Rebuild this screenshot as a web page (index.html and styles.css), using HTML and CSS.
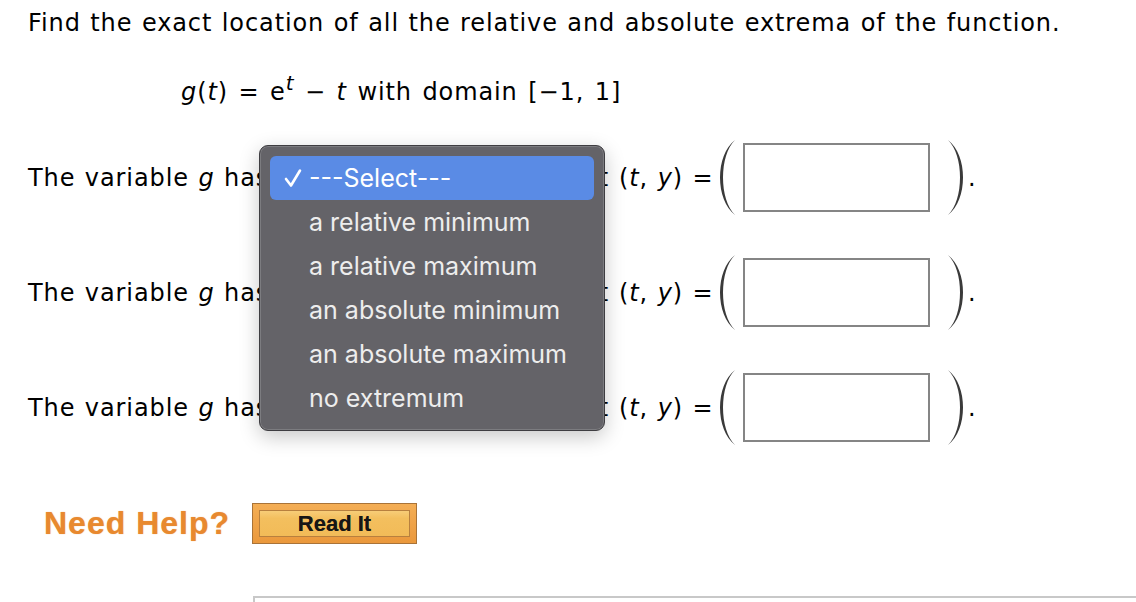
FILE: index.html
```html
<!DOCTYPE html>
<html>
<head>
<meta charset="utf-8">
<link rel="stylesheet" href="styles.css">
</head>
<body>
<div class="page">
  <p class="intro">Find the exact location of all the relative and absolute extrema of the function.</p>
  <p class="formula"><i>g</i>(<i>t</i>) = e<sup><i>t</i></sup> &minus; <i>t</i> with domain [&minus;1, 1]</p>

  <div class="rows">
    <div class="row">
      <div class="lead"><span>The variable <i>g</i> has</span><span class="at">at</span></div>
      <span class="pt">(<i>t</i>, <i>y</i>) =</span>
      <svg class="paren lp" width="18" height="77" viewBox="0 0 18 77"><path d="M17 1 C-3 16 -3 61 17 76 C1 61 1 16 17 1 Z"/></svg>
      <span class="box"></span>
      <svg class="paren rp" width="18" height="77" viewBox="0 0 18 77"><path d="M1 1 C21 16 21 61 1 76 C17 61 17 16 1 1 Z"/></svg>
      <span class="dot">.</span>
    </div>
    <div class="row">
      <div class="lead"><span>The variable <i>g</i> has</span><span class="at">at</span></div>
      <span class="pt">(<i>t</i>, <i>y</i>) =</span>
      <svg class="paren lp" width="18" height="77" viewBox="0 0 18 77"><path d="M17 1 C-3 16 -3 61 17 76 C1 61 1 16 17 1 Z"/></svg>
      <span class="box"></span>
      <svg class="paren rp" width="18" height="77" viewBox="0 0 18 77"><path d="M1 1 C21 16 21 61 1 76 C17 61 17 16 1 1 Z"/></svg>
      <span class="dot">.</span>
    </div>
    <div class="row">
      <div class="lead"><span>The variable <i>g</i> has</span><span class="at">at</span></div>
      <span class="pt">(<i>t</i>, <i>y</i>) =</span>
      <svg class="paren lp" width="18" height="77" viewBox="0 0 18 77"><path d="M17 1 C-3 16 -3 61 17 76 C1 61 1 16 17 1 Z"/></svg>
      <span class="box"></span>
      <svg class="paren rp" width="18" height="77" viewBox="0 0 18 77"><path d="M1 1 C21 16 21 61 1 76 C17 61 17 16 1 1 Z"/></svg>
      <span class="dot">.</span>
    </div>
  </div>

  <div class="help">
    <span class="need">Need Help?</span>
    <span class="read"><span class="read-inner">Read It</span></span>
  </div>

  <div class="panel"></div>

  <div class="menu">
    <div class="item selected">
      <svg class="check" width="18" height="20" viewBox="0 0 18 20"><path d="M2 11 L7 17.5 L16 2.5" fill="none" stroke="#fff" stroke-width="2.6" stroke-linecap="round" stroke-linejoin="round"/></svg>
      <span>---Select---</span>
    </div>
    <div class="item"><span>a relative minimum</span></div>
    <div class="item"><span>a relative maximum</span></div>
    <div class="item"><span>an absolute minimum</span></div>
    <div class="item"><span>an absolute maximum</span></div>
    <div class="item"><span>no extremum</span></div>
  </div>
</div>
</body>
</html>
```

FILE: styles.css
```css
html, body {
  margin: 0;
  padding: 0;
  background: #ffffff;
}

.page {
  position: relative;
  padding: 9px 0 0 28px;
  font-family: "DejaVu Sans", Verdana, sans-serif;
  font-size: 24px;
  letter-spacing: 0.9px;
  word-spacing: 1px;
  color: #000;
  height: 602px;
  box-sizing: border-box;
  overflow: hidden;
}

.intro {
  margin: 0;
  line-height: 28px;
  white-space: nowrap;
}

.formula {
  margin: 41px 0 0 153px;
  line-height: 28px;
  word-spacing: 2px;
}

.formula sup {
  font-size: 20px;
  line-height: 0;
  vertical-align: 10px;
}

.rows {
  margin-top: 14px;
  display: flex;
  flex-direction: column;
}

.row {
  height: 115px;
  display: flex;
  align-items: center;
}

.lead {
  width: 581px;
  display: flex;
  justify-content: space-between;
  line-height: 28px;
  white-space: nowrap;
}

.pt {
  margin-left: 10px;
  width: 90px;
  line-height: 28px;
  white-space: pre;
}

.paren {
  fill: #3a3a3a;
  flex: none;
}

.lp {
  margin-left: 9px;
}

.box {
  margin-left: 7px;
  width: 183px;
  height: 65px;
  border: 2px solid #858585;
  background: #fff;
  flex: none;
}

.rp {
  margin-left: 17px;
}

.dot {
  margin-left: 3px;
  line-height: 28px;
}

.help {
  margin-top: 38px;
  display: flex;
  align-items: center;
  height: 41px;
  letter-spacing: normal;
  word-spacing: normal;
}

.need {
  margin-left: 16px;
  font-family: "Liberation Sans", Arial, sans-serif;
  font-weight: bold;
  font-size: 32px;
  letter-spacing: 1px;
  color: #e8892f;
  text-shadow: 0 0 1px rgba(232, 137, 47, 0.7);
}

.read {
  margin-left: 22px;
  width: 165px;
  height: 41px;
  box-sizing: border-box;
  border: 1px solid #a97338;
  background: linear-gradient(#f4ae55, #ea983c);
  padding: 6px;
  display: flex;
}

.read-inner {
  flex: 1;
  border: 1px solid #b8803e;
  background: linear-gradient(#f7cd78 0, #f3bf5e 30%, #f2bb58 100%);
  display: flex;
  align-items: center;
  justify-content: center;
  font-family: "Liberation Sans", Arial, sans-serif;
  font-weight: bold;
  font-size: 22px;
  color: #161616;
  text-shadow: 0 0 0.6px rgba(0, 0, 0, 0.6);
}

.panel {
  margin: 52px 0 0 225px;
  height: 40px;
  border-top: 2px solid #c8c8c8;
  border-left: 2px solid #c8c8c8;
}

.menu {
  position: absolute;
  left: 259px;
  top: 145px;
  width: 346px;
  height: 286px;
  box-sizing: border-box;
  padding: 10px;
  background: #646368;
  border: 1px solid #3e3d41;
  border-radius: 9px;
  box-shadow: inset 0 0 0 1px rgba(255, 255, 255, 0.16), 0 6px 20px rgba(0, 0, 0, 0.22);
  font-family: "Inter", "Roboto", sans-serif;
  font-size: 25px;
  letter-spacing: normal;
  word-spacing: normal;
  color: #ededed;
}

.item {
  height: 44px;
  display: flex;
  align-items: center;
  padding-left: 39px;
  position: relative;
  border-radius: 6px;
}

.item.selected {
  background: #5a8be5;
  color: #ffffff;
}

.check {
  position: absolute;
  left: 14px;
  top: 12px;
}
```
